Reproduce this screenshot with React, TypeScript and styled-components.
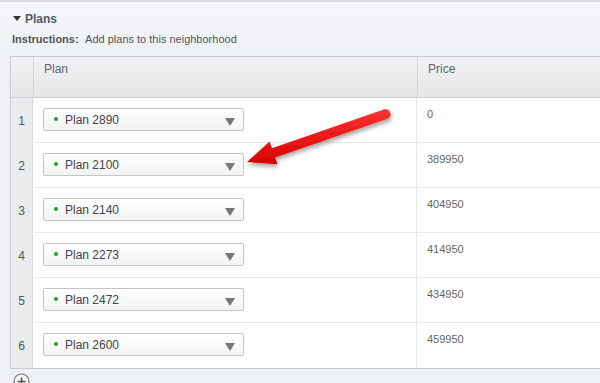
import styled, { createGlobalStyle } from 'styled-components'

const GlobalStyle = createGlobalStyle`
  html, body {
    margin: 0;
    padding: 0;
    background: #eef1f4;
    overflow: hidden;
  }
  body {
    font-family: Arial, "Liberation Sans", sans-serif;
  }
`

const Page = styled.div`
  position: relative;
  width: 600px;
  height: 383px;
  border-top: 2px solid #d9dde1;
  box-sizing: border-box;
  background: linear-gradient(#f4f6f8, #eef1f4 60px);
  overflow: hidden;
`

const SectionHeader = styled.div`
  display: flex;
  align-items: center;
  gap: 4px;
  padding: 9px 0 0 13px;
  height: 15px;
  font-size: 12px;
  font-weight: bold;
  color: #555b61;
`

const Caret = styled.span`
  width: 0;
  height: 0;
  border-left: 4px solid transparent;
  border-right: 4px solid transparent;
  border-top: 5px solid #333;
`

const Instructions = styled.div`
  padding: 7px 0 0 12px;
  font-size: 11px;
  color: #555;
  height: 14px;

  b {
    color: #4f555b;
    margin-right: 4px;
  }
`

const Table = styled.div`
  margin: 9px 0 0 10px;
  width: 600px;
  border: 1px solid #c8cbce;
  border-right: none;
  background: #fff;
`

const HeaderRow = styled.div`
  display: grid;
  grid-template-columns: 22px 384px 1fr;
  height: 40px;
  background: linear-gradient(#f1f2f3, #e4e6e8);
  border-bottom: 1px solid #cfd2d5;
`

const HeaderCell = styled.div<{ $first?: boolean }>`
  padding: 5px 0 0 10px;
  font-size: 12px;
  color: #5f656b;
  border-left: ${({ $first }) => ($first ? 'none' : '1px solid #d2d5d8')};
`

const Row = styled.div<{ $last?: boolean }>`
  display: grid;
  grid-template-columns: 22px 384px 1fr;
  height: 45px;
  border-bottom: ${({ $last }) => ($last ? 'none' : '1px solid #e6e8ea')};
  box-sizing: border-box;
`

const NumCell = styled.div`
  background: #e9ebed;
  border-right: 1px solid #d5d8db;
  display: flex;
  align-items: center;
  justify-content: center;
  font-size: 12px;
  color: #555;
  padding-top: 1px;
`

const PlanCell = styled.div`
  padding: 10px 0 0 10px;
  border-right: 1px solid #e4e6e8;
`

const Select = styled.div`
  display: flex;
  align-items: center;
  width: 201px;
  height: 23px;
  box-sizing: border-box;
  border: 1px solid #c3c6c9;
  border-radius: 2px;
  background: linear-gradient(#ffffff, #f2f3f4);
  padding: 0 8px 0 10px;
  font-size: 12px;
  color: #444;
`

const Dot = styled.span`
  width: 4px;
  height: 4px;
  border-radius: 50%;
  background: #1aa31a;
  margin-right: 7px;
  margin-top: -2px;
`

const Label = styled.span`
  flex: 1;
`

const Arrow = styled.span`
  width: 0;
  height: 0;
  border-left: 5px solid transparent;
  border-right: 5px solid transparent;
  border-top: 8px solid #777;
  margin-top: 4px;
`

const PriceCell = styled.div`
  padding: 10px 0 0 10px;
  font-size: 11px;
  color: #666;
`

const Footer = styled.div`
  padding: 4px 0 0 13px;
`

const Overlay = styled.svg`
  position: absolute;
  left: 0;
  top: 0;
  pointer-events: none;
`

const rows = [
  { plan: 'Plan 2890', price: '0' },
  { plan: 'Plan 2100', price: '389950' },
  { plan: 'Plan 2140', price: '404950' },
  { plan: 'Plan 2273', price: '414950' },
  { plan: 'Plan 2472', price: '434950' },
  { plan: 'Plan 2600', price: '459950' },
]

export default function App() {
  return (
    <Page>
      <GlobalStyle />
      <SectionHeader>
        <Caret />
        Plans
      </SectionHeader>
      <Instructions>
        <b>Instructions:</b> Add plans to this neighborhood
      </Instructions>
      <Table>
        <HeaderRow>
          <HeaderCell $first />
          <HeaderCell>Plan</HeaderCell>
          <HeaderCell>Price</HeaderCell>
        </HeaderRow>
        {rows.map((r, i) => (
          <Row key={r.plan} $last={i === rows.length - 1}>
            <NumCell>{i + 1}</NumCell>
            <PlanCell>
              <Select>
                <Dot />
                <Label>{r.plan}</Label>
                <Arrow />
              </Select>
            </PlanCell>
            <PriceCell>{r.price}</PriceCell>
          </Row>
        ))}
      </Table>
      <Footer>
        <svg width="17" height="17" viewBox="0 0 17 17">
          <circle cx="8.5" cy="8.5" r="7.5" fill="#f7f8f9" stroke="#777" strokeWidth="1.2" />
          <path d="M8.5 4.5v8M4.5 8.5h8" stroke="#555" strokeWidth="1.6" />
        </svg>
      </Footer>
      <Overlay width="600" height="383" viewBox="0 0 600 383">
        <defs>
          <filter id="sh" x="-20%" y="-30%" width="140%" height="170%">
            <feDropShadow dx="1" dy="3" stdDeviation="2" floodColor="#000" floodOpacity="0.35" />
          </filter>
          <linearGradient id="rg" x1="0" y1="0" x2="0" y2="1">
            <stop offset="0" stopColor="#ff3434" />
            <stop offset="1" stopColor="#d60000" />
          </linearGradient>
        </defs>
        <g filter="url(#sh)">
          <path
            d="M384.4 107.3 L271.9 146.2 L269.6 139.6 L247 160 L277.4 162.2 L275.1 155.6 L387.6 116.7 A5 5 0 0 0 384.4 107.3 Z"
            fill="url(#rg)"
            strokeLinejoin="round"
          />
        </g>
      </Overlay>
    </Page>
  )
}
